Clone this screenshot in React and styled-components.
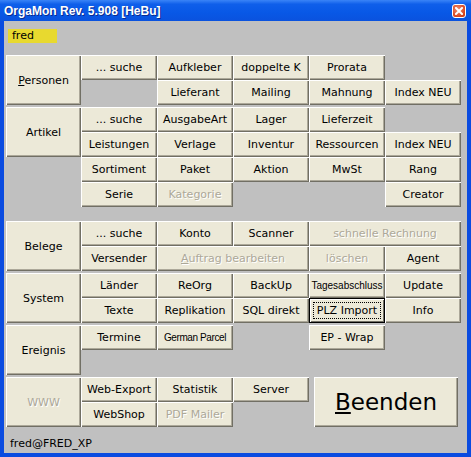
import React from 'react';
import styled, { createGlobalStyle } from 'styled-components';

const GlobalStyle = createGlobalStyle`
  html, body {
    margin: 0;
    padding: 0;
    background: #0a4be0;
  }
  * {
    box-sizing: border-box;
  }
`;

const groups = [
  {
    title: 'Personen',
    key: 'P',
    rows: 2,
    gap: 12,
    buttons: [
      { label: '... suche', col: 2, row: 1 },
      { label: 'Aufkleber', col: 3, row: 1 },
      { label: 'doppelte K', col: 4, row: 1 },
      { label: 'Prorata', col: 5, row: 1 },
      { label: 'Lieferant', col: 3, row: 2 },
      { label: 'Mailing', col: 4, row: 2 },
      { label: 'Mahnung', col: 5, row: 2 },
      { label: 'Index NEU', col: 6, row: 2 },
    ],
  },
  {
    title: 'Artikel',
    rows: 2,
    gap: 2,
    buttons: [
      { label: '... suche', col: 2, row: 1 },
      { label: 'AusgabeArt', col: 3, row: 1 },
      { label: 'Lager', col: 4, row: 1 },
      { label: 'Lieferzeit', col: 5, row: 1 },
      { label: 'Leistungen', col: 2, row: 2 },
      { label: 'Verlage', col: 3, row: 2 },
      { label: 'Inventur', col: 4, row: 2 },
      { label: 'Ressourcen', col: 5, row: 2 },
      { label: 'Index NEU', col: 6, row: 2 },
      { label: 'Sortiment', col: 2, row: 3 },
      { label: 'Paket', col: 3, row: 3 },
      { label: 'Aktion', col: 4, row: 3 },
      { label: 'MwSt', col: 5, row: 3 },
      { label: 'Rang', col: 6, row: 3 },
      { label: 'Serie', col: 2, row: 4 },
      { label: 'Kategorie', col: 3, row: 4, disabled: true },
      { label: 'Creator', col: 6, row: 4 },
    ],
  },
  {
    title: 'Belege',
    rows: 2,
    gap: 14,
    buttons: [
      { label: '... suche', col: 2, row: 1 },
      { label: 'Konto', col: 3, row: 1 },
      { label: 'Scanner', col: 4, row: 1 },
      { label: 'schnelle Rechnung', col: 5, row: 1, span: 2, disabled: true },
      { label: 'Versender', col: 2, row: 2 },
      { label: 'uftrag bearbeiten', key: 'A', col: 3, row: 2, span: 2, disabled: true },
      { label: 'löschen', col: 5, row: 2, disabled: true },
      { label: 'Agent', col: 6, row: 2 },
    ],
  },
  {
    title: 'System',
    rows: 2,
    gap: 2,
    buttons: [
      { label: 'Länder', col: 2, row: 1 },
      { label: 'ReOrg', col: 3, row: 1 },
      { label: 'BackUp', col: 4, row: 1 },
      { label: 'Tagesabschluss', col: 5, row: 1, small: true },
      { label: 'Update', col: 6, row: 1 },
      { label: 'Texte', col: 2, row: 2 },
      { label: 'Replikation', col: 3, row: 2 },
      { label: 'SQL direkt', col: 4, row: 2 },
      { label: 'PLZ Import', col: 5, row: 2, focused: true },
      { label: 'Info', col: 6, row: 2 },
    ],
  },
  {
    title: 'Ereignis',
    rows: 2,
    gap: 2,
    buttons: [
      { label: 'Termine', col: 2, row: 1 },
      { label: 'German Parcel', col: 3, row: 1, small: true, tight: true },
      { label: 'EP - Wrap', col: 5, row: 1 },
    ],
  },
];

export default function App() {
  return (
    <>
      <GlobalStyle />
      <Window>
        <TitleBar>
          <Title>OrgaMon Rev. 5.908 [HeBu]</Title>
          <CloseButton>
            <svg width="8" height="8" viewBox="0 0 8 8">
              <path d="M1 1 L7 7 M7 1 L1 7" stroke="#fff" strokeWidth="2" strokeLinecap="square" />
            </svg>
          </CloseButton>
        </TitleBar>
        <Frame>
          <Client>
            <UserLabel>fred</UserLabel>
            {groups.map(group => (
              <Group key={group.title} $gap={group.gap}>
                <Btn $col={1} $row={1} $rows={group.rows}>
                  {group.key ? (
                    <>
                      <u>{group.key}</u>
                      {group.title.slice(1)}
                    </>
                  ) : (
                    group.title
                  )}
                </Btn>
                {group.buttons.map(b => (
                  <Btn
                    key={`${b.col}-${b.row}`}
                    $col={b.col}
                    $row={b.row}
                    $span={b.span}
                    $disabled={b.disabled}
                    $small={b.small}
                    $tight={b.tight}
                    $focused={b.focused}
                  >
                    {b.key && <u>{b.key}</u>}
                    {b.label}
                  </Btn>
                ))}
              </Group>
            ))}
            <Group $gap={2}>
              <Btn $col={1} $row={1} $rows={2} $disabled>
                WWW
              </Btn>
              <Btn $col={2} $row={1}>Web-Export</Btn>
              <Btn $col={3} $row={1}>Statistik</Btn>
              <Btn $col={4} $row={1}>Server</Btn>
              <Btn $col={2} $row={2}>WebShop</Btn>
              <Btn $col={3} $row={2} $disabled>
                PDF Mailer
              </Btn>
              <QuitButton>
                <u>B</u>eenden
              </QuitButton>
            </Group>
            <StatusLine>fred@FRED_XP</StatusLine>
          </Client>
        </Frame>
      </Window>
    </>
  );
}

const Window = styled.div`
  width: 471px;
  height: 457px;
  display: flex;
  flex-direction: column;
  background: #0a4be0;
`;

const TitleBar = styled.div`
  height: 21px;
  display: flex;
  align-items: center;
  justify-content: space-between;
  padding: 1px 5px 0 4px;
  background: linear-gradient(
    to bottom,
    #3a84f7 0%,
    #0f5fea 20%,
    #0858e6 60%,
    #0a52de 100%
  );
`;

const Title = styled.div`
  color: #fff;
  font-family: 'Liberation Sans', Arial, sans-serif;
  font-weight: bold;
  font-size: 12px;
  text-shadow: 1px 1px 0 #0a2c90;
  white-space: nowrap;
`;

const CloseButton = styled.div`
  width: 14px;
  height: 14px;
  display: flex;
  align-items: center;
  justify-content: center;
  border: 1px solid #fff;
  border-radius: 3px;
  background: radial-gradient(circle at 40% 35%, #f08a6c, #d9461f 70%, #c03a18);
`;

const Frame = styled.div`
  flex: 1;
  display: flex;
  padding: 0 4px 4px 4px;
`;

const Client = styled.div`
  flex: 1;
  background: #c0c0c0;
  padding: 8px 0 0 2px;
  display: flex;
  flex-direction: column;
  align-items: flex-start;
`;

const UserLabel = styled.div`
  width: 49px;
  height: 14px;
  margin-left: 2px;
  padding-left: 4px;
  background: #e8d92f;
  font-family: 'DejaVu Sans', Verdana, sans-serif;
  font-size: 11px;
  line-height: 14px;
  color: #000;
`;

const Group = styled.div`
  display: grid;
  grid-template-columns: 75px repeat(5, 76px);
  grid-auto-rows: 25px;
  margin-top: ${props => props.$gap}px;
`;

const Btn = styled.button`
  position: relative;
  grid-column: ${props => props.$col} / span ${props => props.$span || 1};
  grid-row: ${props => props.$row} / span ${props => props.$rows || 1};
  margin: 0;
  padding: 0;
  border: none;
  background: #ece9d8;
  box-shadow: ${props =>
    props.$focused
      ? 'inset 0 0 0 1px #000, inset 2px 2px 0 #fff, inset -2px -2px 0 #716f64'
      : 'inset 1px 1px 0 #fff, inset -1px -1px 0 #716f64, inset -2px -2px 0 #aca899'};
  color: ${props => (props.$disabled ? '#aca899' : '#000')};
  text-shadow: ${props => (props.$disabled ? '1px 1px 0 #fff' : 'none')};
  font-family: ${props =>
    props.$small ? "'Liberation Sans', Arial, sans-serif" : "'DejaVu Sans', Verdana, sans-serif"};
  font-size: ${props => (props.$small ? '10px' : '11px')};
  letter-spacing: ${props => (props.$tight ? '-0.4px' : '0')};
  white-space: nowrap;
  cursor: default;

  &::after {
    content: '';
    display: ${props => (props.$focused ? 'block' : 'none')};
    position: absolute;
    inset: 4px;
    border: 1px dotted #000;
  }
`;

const QuitButton = styled(Btn).attrs({ $col: 5, $row: 1, $span: 2, $rows: 2 })`
  margin: 0 3px 0 5px;
  font-size: 23px;
`;

const StatusLine = styled.div`
  margin: 10px 0 0 4px;
  font-family: 'DejaVu Sans', Verdana, sans-serif;
  font-size: 11px;
  line-height: 13px;
  color: #000;
`;
